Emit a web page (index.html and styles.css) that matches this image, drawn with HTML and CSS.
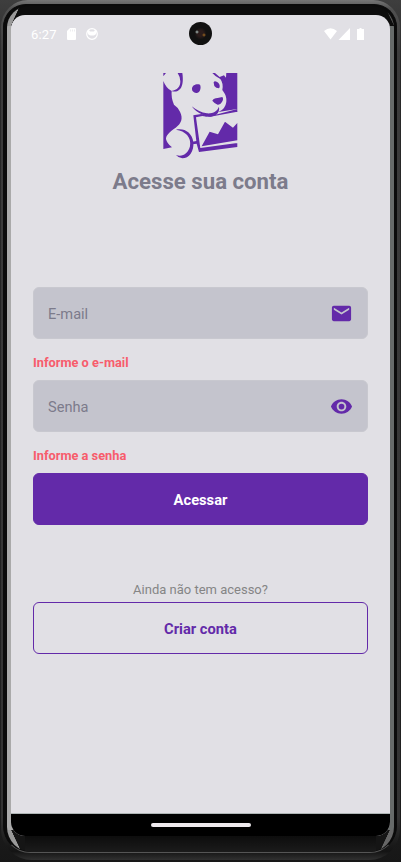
FILE: index.html
```html
<!DOCTYPE html>
<html lang="pt-BR">
<head>
<meta charset="utf-8">
<title>Acesse sua conta</title>
<link rel="stylesheet" href="styles.css">
</head>
<body>
<div class="device">
  <div class="bezel">
    <div class="rim">
      <main class="screen">
        <div class="status">
          <span class="time">6:27</span>
          <svg class="sd" width="9" height="12" viewBox="0 0 9 12"><path fill="#fff" d="M3 0h5q1 0 1 1v10q0 1-1 1H1q-1 0-1-1V3z"/><path stroke="#e1e0e5" stroke-width=".6" d="M3.500 1.500v2M5.500 1.500v2M7.500 1.500v2"/></svg>
          <svg class="face" width="12" height="12" viewBox="0 0 12 12"><circle cx="6" cy="6" r="5.3" fill="none" stroke="#fff" stroke-width="1.200"/><path fill="#fff" d="M1 3l2-1 1 1.500h4L9 2l2 1-1 3-1 1q-3 1-6 0L2 6z"/></svg>
          <svg class="signals" width="41" height="12" viewBox="0 0 41 12"><path fill="#fff" d="M0 3Q6.500-2.500 13 3L6.500 11.500zM14.500 12L26 0v12zM34 1h1.500V0h2v1H40v11h-7V1z"/></svg>
          <i class="camera"></i>
        </div>
        <svg class="logo" viewBox="39 41 223 257">
          <g fill="#632aa9">
            <path d="M40 65Q49 88 65 95Q63 116 72 136Q83 143 90 157C100 178 94 192 77 205C58 218 48 228 48 239Q51 253 66 264L40 269z"/>
            <path d="M40 41h8L40 51zM83 41H97C100 60 99 79 91 88C83 97 75 98 64 95C82 93 91 82 91 66Q90 51 83 41z"/>
            <path d="M187 41H195L209 53L222 48L228 55L229 41H262V149L205 158Q226 151 229 128C231 112 224 101 217 92Q221 72 211 59Q197 53 187 41z"/>
            <path d="M126 87C127 77 140 72 150 76C154 84 151 97 143 100C134 103 125 97 126 87z"/>
            <path d="M191 69Q193 64 200 67C208 71 212 80 207 87Q198 87 193 80z"/>
            <path d="M187 124Q191 116 203 116L217 113Q222 119 216 128Q211 137 203 136Q193 132 187 124z"/>
            <path d="M125 141C142 153 153 160 171 162C190 163 201 156 207 142Q210 157 199 166C184 175 165 174 155 165Q138 158 125 141z"/>
            <path fill-rule="evenodd" d="M130 168L154 164L174 172L262 149V263L147 278L140 253L128 255V247L139 245zM138 174L151 266L262 251V157L176 173L157 170z"/>
            <path d="M155 261L179 217L204 225L225 187L249 205L262 191V243z"/>
            <path d="M78 211C103 205 126 220 130 247C133 276 117 297 97 297Q84 295 78 287C97 295 115 282 120 261C125 233 106 215 78 211z"/>
          </g>
        </svg>
        <h1>Acesse sua conta</h1>
        <form>
          <div class="field"><span>E-mail</span><svg width="24" height="24" viewBox="0 0 24 24"><path fill="#632aa9" d="M20 4H4c-1.100 0-2 .9-2 2v12c0 1.100.9 2 2 2h16c1.100 0 2-.9 2-2V6c0-1.100-.9-2-2-2zm0 4l-8 5-8-5V6l8 5 8-5z"/></svg></div>
          <p class="error">Informe o e-mail</p>
          <div class="field"><span>Senha</span><svg width="24" height="24" viewBox="0 0 24 24"><path fill="#632aa9" d="M12 4.500C7 4.500 2.730 7.610 1 12c1.730 4.390 6 7.500 11 7.500s9.270-3.110 11-7.500c-1.730-4.390-6-7.500-11-7.500zM12 17c-2.760 0-5-2.240-5-5s2.240-5 5-5 5 2.240 5 5-2.240 5-5 5zm0-8a3 3 0 1 0 0 6 3 3 0 0 0 0-6z"/></svg></div>
          <p class="error">Informe a senha</p>
          <button type="button" class="primary">Acessar</button>
          <p class="hint">Ainda não tem acesso?</p>
          <button type="button" class="outline">Criar conta</button>
        </form>
        <div class="nav"><i></i></div>
      </main>
    </div>
  </div>
</div>
</body>
</html>
```
FILE: styles.css
```css
* { box-sizing: border-box; }
body {
  margin: 0;
  height: 862px;
  overflow: hidden;
  background: linear-gradient(#3e3e3e, #292929 8%, #202020 90%, #171717);
  font-family: Roboto, sans-serif;
}
.device {
  height: 860px;
  margin: 0 1px;
  padding: 4px 3px 7px 2px;
  border-radius: 27px 27px 31px 31px;
  background: linear-gradient(#777, #505050 1%, #3c3c3c 6%, #333 95%, #141414 99%, #303030);
}
.bezel {
  height: 849px;
  padding: 1px 0 0;
  border: 1px solid #0b0b0b;
  border-bottom-color: #555;
  border-radius: 23px 23px 27px 27px;
  background: #0b0b0b;
}
.rim {
  height: 846px;
  margin: 0 2px 0 3px;
  padding: 9px 4px 15px;
  border-radius: 22px 22px 25px 25px;
  background:
    linear-gradient(115deg, #999 50%, #0d0d0d 52%) 0 0 / 16px 20px no-repeat,
    linear-gradient(245deg, #555 35%, #0d0d0d 38%) 100% 0 / 16px 20px no-repeat,
    linear-gradient(65deg, #999 50%, #151515 52%) 0 100% / 18px 22px no-repeat,
    linear-gradient(295deg, #666 50%, #151515 52%) 100% 100% / 18px 22px no-repeat,
    linear-gradient(#0d0d0d, #0d0d0d) 16px 0 / calc(100% - 32px) 10px no-repeat,
    linear-gradient(#0d0d0d, #1b1b1b) 18px 100% / calc(100% - 36px) 16px no-repeat,
    linear-gradient(90deg, #aaa 0 50%, #676b6a 50%);
}
.screen {
  display: flex;
  flex-direction: column;
  align-items: center;
  width: 379px;
  height: 821px;
  overflow: hidden;
  border-radius: 14px;
  background: #e1e0e5;
}
.status {
  position: relative;
  display: flex;
  align-items: center;
  align-self: stretch;
  height: 38px;
  padding: 0 25px 0 20px;
  color: #fff;
}
.time { width: 36px; font-size: 13px; letter-spacing: .2px; }
.face { margin-left: 10px; }
.signals { margin-left: auto; }
.camera {
  position: absolute;
  left: 178px;
  top: 7px;
  width: 23px;
  height: 23px;
  border-radius: 50%;
  background:
    radial-gradient(circle at 8px 10px, #8a9793 0 .5px, transparent 2px),
    radial-gradient(circle at 15px 13px, #80541f 0 .5px, transparent 2px),
    radial-gradient(circle, #2b1c1b 0 3px, #111 6px);
}
.logo { width: 74.300px; height: 85.700px; margin-top: 20.300px; }
h1 {
  margin: 9.400px 0 0;
  color: #7c7b8b;
  font-size: 22.200px;
  line-height: 26px;
  font-weight: 700;
}
form {
  display: flex;
  flex-direction: column;
  width: 335px;
  margin-top: 93px;
}
.field {
  display: flex;
  align-items: center;
  justify-content: space-between;
  height: 52px;
  padding: 0 14px;
  border: 1px solid #c8c8cf;
  border-radius: 6px;
  background: #c4c4cd;
  color: #7c7b8b;
  font-size: 14.600px;
}
.field span { padding-top: 1px; }
.field svg { width: 23px; height: 23px; }
.error {
  height: 41px;
  margin: 0;
  padding-top: 16px;
  color: #f75c6c;
  font-size: 12.800px;
  line-height: 16px;
  font-weight: 700;
}
button {
  height: 52px;
  padding: 1px 0 0;
  border: 1px solid #632aa9;
  border-radius: 6px;
  font: 700 14.700px/20px Roboto, sans-serif;
}
.primary { background: #632aa9; color: #fff; }
.outline { background: transparent; color: #632aa9; }
.hint {
  margin: 56px 0 4px;
  color: #858585;
  font-size: 13px;
  line-height: 17px;
  text-align: center;
}
.nav {
  display: flex;
  justify-content: center;
  align-self: stretch;
  height: 23px;
  margin-top: auto;
  padding-top: 9px;
  border-top: 1px solid #aeb5b5;
  background: #000;
}
.nav i { width: 100px; height: 4px; border-radius: 2px; background: #eee9ed; }
```
